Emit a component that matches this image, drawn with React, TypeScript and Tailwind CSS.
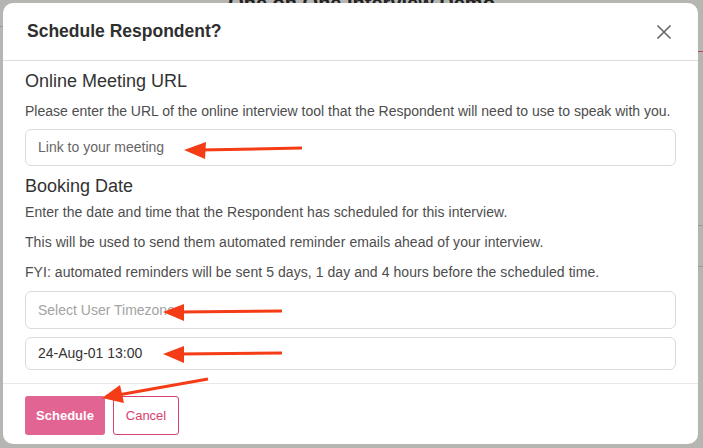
export default function App() {
    return (
        <div className="relative w-[703px] h-[448px] overflow-hidden bg-[#b5b5b1] font-['Liberation_Sans',sans-serif]">
            {/* page behind the overlay */}
            <div className="flex justify-center -mt-[12px] pl-[20px]">
                <span className="text-[20px] font-bold text-[#222]">One on One Interview Demo</span>
            </div>
            <div className="absolute left-0 top-[26px] w-[4px] h-[1px] bg-[#999]" />
            <div className="absolute right-0 top-[51px] w-[6px] h-[1px] bg-[#b0485f]" />
            <div className="absolute right-0 top-[225px] w-[6px] h-[1px] bg-[#999]" />
            <div className="absolute right-0 top-[266px] w-[6px] h-[1px] bg-[#999]" />

            <div className="absolute left-[3px] top-[3px] w-[695px] h-[441px] bg-white rounded-[10px] flex flex-col">
                <div className="shrink-0 h-[58px] border-b border-[#dcdcdc] flex items-center justify-between pl-[24px] pr-[26px]">
                    <h2 className="text-[17.5px] font-bold text-[#2f2f2f]">Schedule Respondent?</h2>
                    <svg width="16" height="16" viewBox="0 0 16 16" className="text-[#666]">
                        <path d="M1.5 1.5 L14.5 14.5 M14.5 1.5 L1.5 14.5" stroke="currentColor" strokeWidth="1.6" fill="none" />
                    </svg>
                </div>

                <div className="shrink-0 flex flex-col px-[22px] pt-[7px] pb-[13px] border-b border-[#e8e8e8]">
                    <h3 className="text-[18px] leading-[27px] text-[#333]">Online Meeting URL</h3>
                    <p className="mt-[6px] text-[14px] leading-[20px] whitespace-nowrap text-[#4d4d4d]">
                        Please enter the URL of the online interview tool that the Respondent will need to use to speak with you.
                    </p>
                    <div className="mt-[8px] h-[37px] border border-[#dcdcd6] rounded-[6px] flex items-center pl-[12px] text-[14px] text-[#666]">
                        Link to your meeting
                    </div>
                    <h3 className="mt-[7px] text-[18px] leading-[27px] text-[#333]">Booking Date</h3>
                    <div className="flex flex-col gap-[10px] mt-[2px] tracking-[0.06px]">
                        <p className="text-[14px] leading-[20px] text-[#4d4d4d]">
                            Enter the date and time that the Respondent has scheduled for this interview.
                        </p>
                        <p className="text-[14px] leading-[20px] text-[#4d4d4d]">
                            This will be used to send them automated reminder emails ahead of your interview.
                        </p>
                        <p className="text-[14px] leading-[20px] text-[#4d4d4d]">
                            FYI: automated reminders will be sent 5 days, 1 day and 4 hours before the scheduled time.
                        </p>
                    </div>
                    <div className="mt-[9px] h-[38px] border border-[#dcdcd6] rounded-[6px] flex items-center pl-[12px] text-[14px] text-[#a3a3a3]">
                        Select User Timezone
                    </div>
                    <div className="mt-[8px] h-[33px] border border-[#dcdcd6] rounded-[6px] flex items-center pl-[12px] text-[14px] text-[#333]">
                        24-Aug-01 13:00
                    </div>
                </div>

                <div className="flex gap-[8px] px-[22px] pt-[12px]">
                    <button className="h-[39px] w-[80px] rounded-[3px] bg-[#e26493] text-white text-[13px] font-bold">
                        Schedule
                    </button>
                    <button className="h-[39px] w-[66px] rounded-[3px] border border-[#d8416f] text-[#d8416f] text-[13px]">
                        Cancel
                    </button>
                </div>
            </div>

            {/* annotation arrows */}
            <svg className="absolute left-0 top-0" width="703" height="448" viewBox="0 0 703 448">
                <g fill="#f43c16" stroke="#f43c16">
                    <line x1="302" y1="148" x2="200" y2="150" strokeWidth="3" />
                    <polygon points="184,150 206,142 205,159" stroke="none" />
                    <line x1="282" y1="311" x2="179" y2="312" strokeWidth="3" />
                    <polygon points="163,312 184,304 184,321" stroke="none" />
                    <line x1="282" y1="353" x2="179" y2="354" strokeWidth="3" />
                    <polygon points="163,354 184,346 184,363" stroke="none" />
                    <line x1="208" y1="379" x2="118" y2="395" strokeWidth="3" />
                    <polygon points="102,398 120,385 124,403" stroke="none" />
                </g>
            </svg>
        </div>
    )
}
